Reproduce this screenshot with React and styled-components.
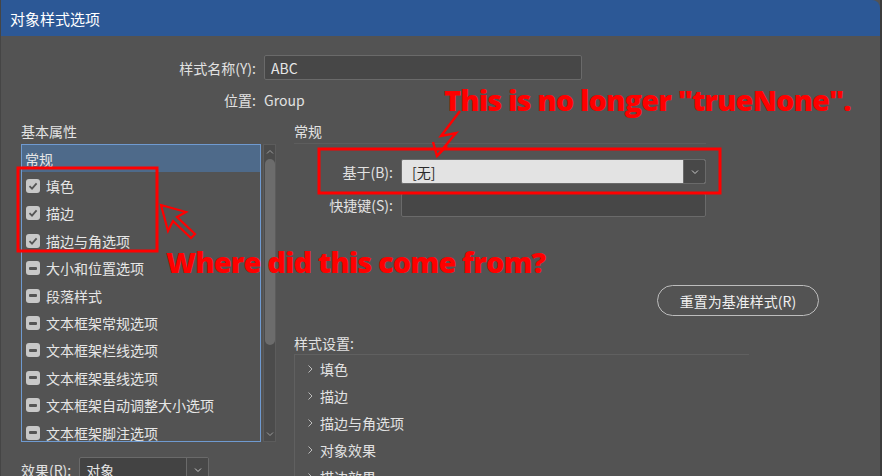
import React from 'react';
import styled, { createGlobalStyle } from 'styled-components';

const GlobalStyle = createGlobalStyle`
  html, body {
    margin: 0;
    padding: 0;
    background: #535353;
  }
  * {
    box-sizing: border-box;
  }
`;

const Window = styled.div`
  position: relative;
  width: 882px;
  height: 476px;
  overflow: hidden;
  background: #535353;
  border-right: 2px solid #3c3c3c;
  border-left: 1px solid #454545;
  font-family: "Noto Sans CJK SC", "Noto Sans", sans-serif;
  font-size: 14px;
  color: #e2e2e2;
`;

const TitleBar = styled.div`
  height: 36px;
  display: flex;
  align-items: center;
  padding-left: 9px;
  background: #2c5896;
  border-top-right-radius: 8px;
  color: #ffffff;
  font-size: 15px;
`;

const Body = styled.div`
  padding-top: 19px;
`;

const TopForm = styled.div`
  display: grid;
  grid-template-columns: 255px 318px;
  grid-template-rows: 25px 20px;
  column-gap: 8px;
  row-gap: 10px;
  align-items: center;
`;

const FieldLabel = styled.div`
  text-align: right;
  white-space: nowrap;
  line-height: 20px;
`;

const TextInput = styled.div`
  height: ${({ h }) => h || 25}px;
  display: flex;
  align-items: center;
  padding-left: 6px;
  background: #474747;
  border: 1px solid #6a6a6a;
  border-radius: 2px;
  color: #e6e6e6;
`;

const Value = styled.div`
  line-height: 20px;
  color: #e2e2e2;
`;

const Main = styled.div`
  display: flex;
  margin-top: 11px;
`;

const LeftColumn = styled.div`
  width: 293px;
  padding-left: 20px;
  display: flex;
  flex-direction: column;
`;

const RightColumn = styled.div`
  flex: 1;
  display: flex;
  flex-direction: column;
`;

const Heading = styled.div`
  height: 20px;
  line-height: 20px;
  color: #e4e4e4;
`;

const ListArea = styled.div`
  display: flex;
  gap: 2px;
  margin-top: 3px;
  height: 298px;
`;

const List = styled.div`
  width: 240px;
  border: 1px solid #6f9ad0;
  overflow: hidden;
`;

const ListRow = styled.div`
  height: 27.4px;
  display: flex;
  align-items: center;
  gap: 6px;
  padding-left: ${({ selected }) => (selected ? 3 : 4)}px;
  background: ${({ selected }) => (selected ? '#4e6a8a' : 'transparent')};
  color: #e6e6e6;
  white-space: nowrap;
`;

const Box = styled.span`
  width: 14px;
  height: 14px;
  flex: none;
  border-radius: 3px;
  background: #c8c8c8;
  display: flex;
  align-items: center;
  justify-content: center;
`;

const Dash = styled.span`
  width: 8px;
  height: 3px;
  background: #555555;
  border-radius: 1px;
`;

const ScrollBar = styled.div`
  width: 13px;
  background: #4b4b4b;
  border: 1px solid #5c5c5c;
  display: flex;
  flex-direction: column;
  align-items: center;
  padding: 2px 0;
`;

const ScrollThumb = styled.div`
  width: 10px;
  height: 186px;
  margin-top: 2px;
  border-radius: 5px;
  background: #6c6c6c;
`;

const ScrollSpacer = styled.div`
  flex: 1;
`;

const EffectRow = styled.div`
  display: flex;
  align-items: center;
  gap: 8px;
  margin-top: 15px;
`;

const Select = styled.div`
  width: ${({ w }) => w}px;
  height: 25px;
  display: flex;
  border: 1px solid #6a6a6a;
  border-radius: 2px;
  overflow: hidden;
  background: ${({ light }) => (light ? '#e3e3e3' : '#434343')};
`;

const SelectText = styled.div`
  flex: 1;
  display: flex;
  align-items: center;
  padding-left: ${({ light }) => (light ? 10 : 6)}px;
  color: ${({ light }) => (light ? '#2a2a2a' : '#e6e6e6')};
`;

const SelectButton = styled.div`
  width: 22px;
  display: flex;
  align-items: center;
  justify-content: center;
  background: #484848;
  border-left: 1px solid #6a6a6a;
`;

const Separator = styled.div`
  width: 412px;
  height: 1px;
  margin-top: 2px;
  background: #5d5d5d;
`;

const SubForm = styled.div`
  display: grid;
  grid-template-columns: 99px 305px;
  grid-template-rows: 25px 24px;
  column-gap: 8px;
  row-gap: 9px;
  align-items: center;
  margin-top: 15px;
`;

const ButtonRow = styled.div`
  display: flex;
  justify-content: flex-end;
  width: 525px;
  margin-top: 68px;
`;

const PillButton = styled.div`
  width: 162px;
  height: 31px;
  display: flex;
  align-items: center;
  justify-content: center;
  border: 1.5px solid #bdbdbd;
  border-radius: 16px;
  color: #f0f0f0;
`;

const SettingsLabel = styled.div`
  height: 20px;
  line-height: 20px;
  margin-top: 17px;
`;

const Tree = styled.div`
  width: 455px;
  margin-top: 1px;
  border-top: 1px solid #606060;
  border-left: 1px solid #606060;
`;

const TreeRow = styled.div`
  height: 27px;
  display: flex;
  align-items: center;
  gap: 5px;
  padding-left: 10px;
  color: #e2e2e2;
`;

const Annotations = styled.svg`
  position: absolute;
  left: 0;
  top: 0;
  pointer-events: none;
`;

const Callout = styled.div`
  position: absolute;
  left: ${({ x }) => x}px;
  top: ${({ y }) => y}px;
  color: #ff0000;
  font-family: "Open Sans", "Noto Sans", sans-serif;
  font-weight: 800;
  font-size: 29px;
  line-height: 36px;
  white-space: nowrap;
  letter-spacing: -0.9px;
`;

const Check = () => (
  <Box>
    <svg width="10" height="10" viewBox="0 0 10 10">
      <path d="M1.5 5.2 L4 7.6 L8.6 2.4" fill="none" stroke="#555" strokeWidth="1.8" />
    </svg>
  </Box>
);

const Minus = () => (
  <Box>
    <Dash />
  </Box>
);

const Chevron = ({ dir = 'down', color = '#c8c8c8', size = 10 }) => {
  const paths = {
    down: 'M2 3.5 L5 6.5 L8 3.5',
    up: 'M2 6.5 L5 3.5 L8 6.5',
    right: 'M3.5 1.5 L7 5 L3.5 8.5',
  };
  return (
    <svg width={size} height={size} viewBox="0 0 10 10">
      <path d={paths[dir]} fill="none" stroke={color} strokeWidth="1" />
    </svg>
  );
};

const listItems = [
  { label: '填色', type: 'check' },
  { label: '描边', type: 'check' },
  { label: '描边与角选项', type: 'check' },
  { label: '大小和位置选项', type: 'minus' },
  { label: '段落样式', type: 'minus' },
  { label: '文本框架常规选项', type: 'minus' },
  { label: '文本框架栏线选项', type: 'minus' },
  { label: '文本框架基线选项', type: 'minus' },
  { label: '文本框架自动调整大小选项', type: 'minus' },
  { label: '文本框架脚注选项', type: 'minus' },
];

const treeItems = ['填色', '描边', '描边与角选项', '对象效果', '描边效果'];

export default function App() {
  return (
    <>
      <GlobalStyle />
      <Window>
        <TitleBar>对象样式选项</TitleBar>
        <Body>
          <TopForm>
            <FieldLabel>样式名称(Y):</FieldLabel>
            <TextInput>ABC</TextInput>
            <FieldLabel>位置:</FieldLabel>
            <Value>Group</Value>
          </TopForm>

          <Main>
            <LeftColumn>
              <Heading>基本属性</Heading>
              <ListArea>
                <List>
                  <ListRow selected>常规</ListRow>
                  {listItems.map((item) => (
                    <ListRow key={item.label}>
                      {item.type === 'check' ? <Check /> : <Minus />}
                      {item.label}
                    </ListRow>
                  ))}
                </List>
                <ScrollBar>
                  <Chevron dir="up" color="#9a9a9a" />
                  <ScrollThumb />
                  <ScrollSpacer />
                  <Chevron dir="down" color="#9a9a9a" />
                </ScrollBar>
              </ListArea>
              <EffectRow>
                <span>效果(R):</span>
                <Select w={130}>
                  <SelectText>对象</SelectText>
                  <SelectButton>
                    <Chevron />
                  </SelectButton>
                </Select>
              </EffectRow>
            </LeftColumn>

            <RightColumn>
              <Heading>常规</Heading>
              <Separator />
              <SubForm>
                <FieldLabel>基于(B):</FieldLabel>
                <Select w={305} light>
                  <SelectText light>[无]</SelectText>
                  <SelectButton>
                    <Chevron />
                  </SelectButton>
                </Select>
                <FieldLabel>快捷键(S):</FieldLabel>
                <TextInput h={24} />
              </SubForm>
              <ButtonRow>
                <PillButton>重置为基准样式(R)</PillButton>
              </ButtonRow>
              <SettingsLabel>样式设置:</SettingsLabel>
              <Tree>
                {treeItems.map((label) => (
                  <TreeRow key={label}>
                    <Chevron dir="right" color="#bdbdbd" size={10} />
                    {label}
                  </TreeRow>
                ))}
              </Tree>
            </RightColumn>
          </Main>
        </Body>

        <Annotations width="882" height="476" viewBox="0 0 882 476">
          <g fill="none" stroke="#ff0000" strokeWidth="3" strokeLinejoin="miter">
            <rect x="17" y="168" width="139" height="83" />
            <rect x="318" y="149" width="401" height="44" />
            <path d="M160 205 L185 212 L176 217 L194 234 L190 238 L172 221 L167 231 Z" strokeWidth="2.2" />
            <path d="M459 111 L440 136 L455 133 L436 156" strokeWidth="2.4" />
            <path d="M432 142 L436 156 L446 146" strokeWidth="2.4" />
          </g>
        </Annotations>
        <Callout x={443} y={82}>This is no longer "trueNone".</Callout>
        <Callout x={165} y={244}>Where did this come from?</Callout>
      </Window>
    </>
  );
}
